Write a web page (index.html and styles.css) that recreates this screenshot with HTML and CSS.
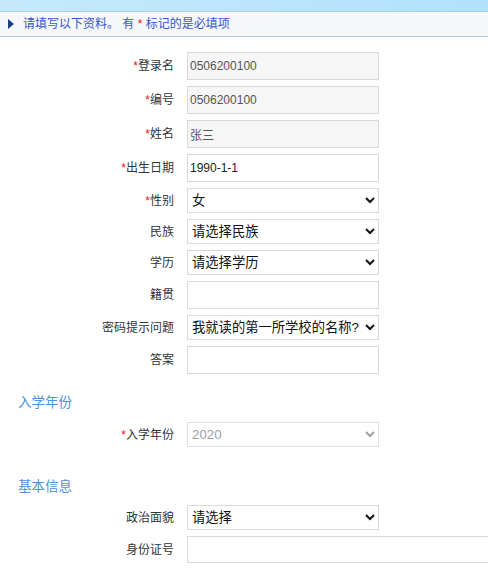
FILE: index.html
```html
<html>
	<head>
		<title>完善资料</title>
		<link rel="stylesheet" href="styles.css">
	</head>
	<body>
		<div class="topband"></div>
		<div class="tipbar">
			<span class="arrow"></span>
			<span class="tiptext">请填写以下资料。 有 <span class="req">*</span> 标记的是必填项</span>
		</div>

		<div class="form">
			<div class="row">
				<label class="lbl"><span class="req">*</span>登录名</label>
				<input class="txt" type="text" value="0506200100" readonly>
			</div>
			<div class="row">
				<label class="lbl"><span class="req">*</span>编号</label>
				<input class="txt" type="text" value="0506200100" readonly>
			</div>
			<div class="row">
				<label class="lbl"><span class="req">*</span>姓名</label>
				<input class="txt" type="text" value="张三" readonly>
			</div>
			<div class="row">
				<label class="lbl"><span class="req">*</span>出生日期</label>
				<input class="txt" type="text" value="1990-1-1">
			</div>
			<div class="row">
				<label class="lbl"><span class="req">*</span>性别</label>
				<select class="sel"><option>女</option><option>男</option></select>
			</div>
			<div class="row">
				<label class="lbl">民族</label>
				<select class="sel"><option>请选择民族</option></select>
			</div>
			<div class="row">
				<label class="lbl">学历</label>
				<select class="sel"><option>请选择学历</option></select>
			</div>
			<div class="row">
				<label class="lbl">籍贯</label>
				<input class="txt" type="text">
			</div>
			<div class="row">
				<label class="lbl">密码提示问题</label>
				<select class="sel"><option>我就读的第一所学校的名称?</option></select>
			</div>
			<div class="row">
				<label class="lbl">答案</label>
				<input class="txt" type="text">
			</div>
		</div>

		<div class="section section-year">
			<div class="section-title">入学年份</div>
			<div class="row">
				<label class="lbl"><span class="req">*</span>入学年份</label>
				<select class="sel" disabled><option>2020</option></select>
			</div>
		</div>

		<div class="section">
			<div class="section-title">基本信息</div>
			<div class="form">
				<div class="row">
					<label class="lbl">政治面貌</label>
					<select class="sel"><option>请选择</option></select>
				</div>
				<div class="row">
					<label class="lbl">身份证号</label>
					<input class="txt wide" type="text">
				</div>
			</div>
		</div>
	</body>
</html>
```

FILE: styles.css
```css
body
{
	margin: 0;
	background: #ffffff;
	color: #333333;
	font-family: "Liberation Sans", "Noto Sans CJK SC", sans-serif;
	font-size: 12px;
	overflow: hidden;
}

.topband
{
	height: 11px;
	background: linear-gradient(to right, #c6e9fc, #b9e5fc 60%, #b0e2fc);
	border-bottom: 1px solid #a6d0ea;
}
.tipbar
{
	height: 24px;
	background: #f5f7fa;
	border-bottom: 1px solid #b4c8d8;
	color: #3656cc;
	padding-left: 8px;
	display: flex;
	align-items: center;
}
.tiptext
{
	line-height: 16px;
	white-space: pre;
}
.arrow
{
	width: 0;
	height: 0;
	border-top: 5px solid transparent;
	border-bottom: 5px solid transparent;
	border-left: 6px solid #1f3f8f;
	margin-right: 9px;
}
.req
{
	color: #ee1111;
}

.form
{
	display: flex;
	flex-direction: column;
	gap: 6px;
}
body > .form
{
	padding-top: 15px;
}
.row
{
	display: flex;
	align-items: center;
	gap: 13px;
}
.lbl
{
	width: 174px;
	text-align: right;
	line-height: 16px;
	flex: none;
}

.txt
{
	box-sizing: border-box;
	width: 192px;
	height: 28px;
	margin: 0;
	padding: 0 2px;
	border: 1px solid #d9d9d9;
	font-family: "Liberation Sans", "Noto Sans CJK SC", sans-serif;
	font-size: 12px;
	color: #222222;
	outline: none;
	flex: none;
}
.txt[readonly]
{
	background: #f6f6f6;
	color: #555555;
}
.txt.wide
{
	flex: 1;
	width: auto;
	min-width: 0;
	height: 27px;
	border-right: none;
}
.sel
{
	box-sizing: border-box;
	width: 192px;
	height: 25px;
	margin: 0;
	border: 1px solid #d9d9d9;
	border-radius: 0;
	background: #ffffff;
	font-family: "Liberation Sans", "Noto Sans CJK SC", sans-serif;
	font-size: 13.3px;
	color: #111111;
}
.sel[disabled]
{
	color: #a0a0a0;
	border-color: #e0e0e0;
	opacity: 1;
}

.section-title
{
	color: #4d92dc;
	font-size: 13.5px;
	line-height: 20px;
	margin: 19px 0 9px 18px;
}
.section-year
{
	padding-bottom: 10px;
}
.section-year + .section .section-title
{
	margin-top: 20px;
	margin-bottom: 8px;
}
```
